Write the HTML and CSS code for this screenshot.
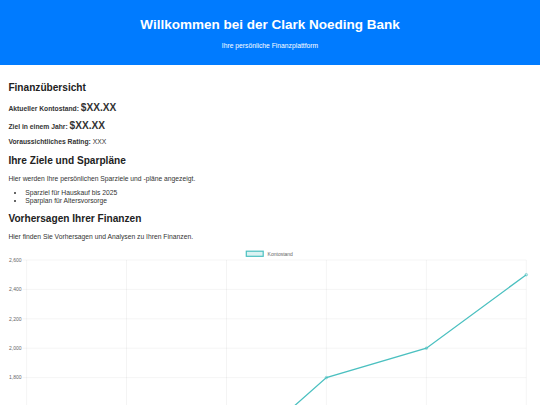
FILE: index.html
```html
<!DOCTYPE html>
<html lang="de">
<head>
  <meta charset="UTF-8" />
  <meta name="viewport" content="width=device-width, initial-scale=1.0"/>
  <title>Clark Noeding Bank</title>
  <link rel="stylesheet" href="styles.css">
</head>
<body>
  <header>
    <h1>Willkommen bei der Clark Noeding Bank</h1>
    <p>Ihre persönliche Finanzplattform</p>
  </header>
  <div class="container">

    <!-- Finanzübersicht -->
    <section>
      <h2>Finanzübersicht</h2>
      <p><strong>Aktueller Kontostand:</strong> <span class="amount">$XX.XX</span></p>
      <p><strong>Ziel in einem Jahr:</strong> <span class="amount">$XX.XX</span></p>
      <p><strong>Voraussichtliches Rating:</strong> XXX</p>
    </section>

    <!-- Ziele -->
    <section>
      <h2>Ihre Ziele und Sparpläne</h2>
      <p>Hier werden Ihre persönlichen Sparziele und -pläne angezeigt.</p>
      <ul>
        <li>Sparziel für Hauskauf bis 2025</li>
        <li>Sparplan für Altersvorsorge</li>
      </ul>
    </section>

    <!-- Vorhersagen -->
    <section>
      <h2>Vorhersagen Ihrer Finanzen</h2>
      <p>Hier finden Sie Vorhersagen und Analysen zu Ihren Finanzen.</p>
      <div class="chart">
        <svg width="523" height="262" viewBox="0 0 523 262">
          <!-- legend -->
          <rect class="legend-box" x="238.3" y="4.2" width="16.9" height="5.1"/>
          <text class="tick" x="259.6" y="8.6">Kontostand</text>

          <!-- grid -->
          <g class="grid">
            <line x1="14.4" y1="13" x2="518.3" y2="13"/>
            <line x1="14.4" y1="42.4" x2="518.3" y2="42.4"/>
            <line x1="14.4" y1="71.8" x2="518.3" y2="71.8"/>
            <line x1="14.4" y1="101.2" x2="518.3" y2="101.2"/>
            <line x1="14.4" y1="130.6" x2="518.3" y2="130.6"/>
            <line x1="14.4" y1="160" x2="518.3" y2="160"/>
            <line x1="14.4" y1="189.4" x2="518.3" y2="189.4"/>
            <line x1="14.4" y1="218.8" x2="518.3" y2="218.8"/>
            <line x1="14.4" y1="248.2" x2="518.3" y2="248.2"/>
            <line x1="18.6" y1="13" x2="18.6" y2="252.4"/>
            <line x1="118.5" y1="13" x2="118.5" y2="252.4"/>
            <line x1="218.5" y1="13" x2="218.5" y2="252.4"/>
            <line x1="318.4" y1="13" x2="318.4" y2="252.4"/>
            <line x1="418.4" y1="13" x2="418.4" y2="252.4"/>
            <line x1="518.3" y1="13" x2="518.3" y2="252.4"/>
          </g>

          <!-- y ticks -->
          <g class="ticks-y">
            <text x="13.6" y="14.8">2,600</text>
            <text x="13.6" y="44.2">2,400</text>
            <text x="13.6" y="73.6">2,200</text>
            <text x="13.6" y="103">2,000</text>
            <text x="13.6" y="132.4">1,800</text>
            <text x="13.6" y="161.8">1,600</text>
            <text x="13.6" y="191.2">1,400</text>
            <text x="13.6" y="220.6">1,200</text>
            <text x="13.6" y="250">1,000</text>
          </g>

          <!-- x ticks -->
          <g class="ticks-x">
            <text x="18.6" y="258.5">Jan</text>
            <text x="118.5" y="258.5">Feb</text>
            <text x="218.5" y="258.5">Mär</text>
            <text x="318.4" y="258.5">Apr</text>
            <text x="418.4" y="258.5">Mai</text>
            <text x="518.3" y="258.5">Jun</text>
          </g>

          <!-- data -->
          <polyline class="series" points="18.6,248.2 118.5,233.5 218.5,218.8 318.4,130.6 418.4,101.2 518.3,27.7"/>
          <g class="points">
            <circle cx="18.6" cy="248.2" r="1.3"/>
            <circle cx="118.5" cy="233.5" r="1.3"/>
            <circle cx="218.5" cy="218.8" r="1.3"/>
            <circle cx="318.4" cy="130.6" r="1.3"/>
            <circle cx="418.4" cy="101.2" r="1.3"/>
            <circle cx="518.3" cy="27.7" r="1.3"/>
          </g>
        </svg>
      </div>
    </section>
  </div>
</body>
</html>
```

FILE: styles.css
```css
body {
  margin: 0;
  font-family: "Liberation Sans", Arial, sans-serif;
  font-size: 6.75px;
  line-height: 1.15;
  background: white;
  color: #333;
}

header {
  background: #007bff;
  color: white;
  padding: 8.4px;
  text-align: center;
}

header h1 {
  font-size: 13.5px;
  margin: 9px 0;
}

header p {
  margin: 6.75px 0;
}

.container {
  padding: 8.4px;
}

h2 {
  font-size: 10.125px;
  margin: 0.83em 0;
  color: #222;
}

p {
  margin: 1em 0;
}

.amount {
  font-size: 1.5em;
  font-weight: bold;
}

ul {
  margin: 1em 0;
  padding-left: 16.9px;
}

.chart svg {
  display: block;
}

.grid line {
  stroke: rgba(0, 0, 0, 0.1);
  stroke-width: 0.45;
}

.tick,
.ticks-y text,
.ticks-x text {
  font-family: "Liberation Sans", Arial, sans-serif;
  font-size: 5px;
  fill: #666;
}

.ticks-y text {
  text-anchor: end;
}

.ticks-x text {
  text-anchor: middle;
}

.legend-box {
  fill: rgba(75, 192, 192, 0.2);
  stroke: rgb(75, 192, 192);
  stroke-width: 1.2;
}

.series {
  fill: none;
  stroke: rgb(75, 192, 192);
  stroke-width: 1.3;
}

.points circle {
  fill: rgba(75, 192, 192, 0.2);
  stroke: rgb(75, 192, 192);
  stroke-width: 0.5;
}
```
